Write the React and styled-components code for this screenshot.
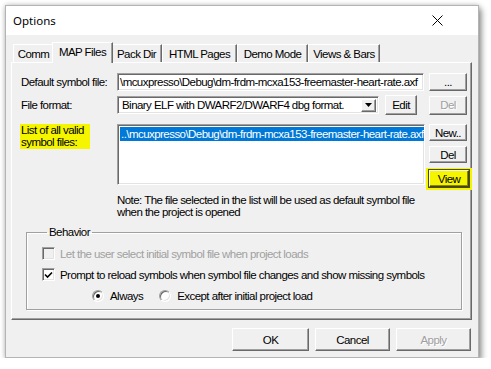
import React from 'react';
import styled, { createGlobalStyle } from 'styled-components';

const Global = createGlobalStyle`
  body {
    margin: 0;
    background: #ffffff;
    font-family: "Liberation Sans", Arial, sans-serif;
    font-size: 11.5px;
    letter-spacing: -0.55px;
    color: #000000;
  }
`;

const Window = styled.div`
  //dialog frame
  margin: 5px 0 0 5px;
  width: 474px;
  height: 353px;
  box-sizing: border-box;
  border: 1px solid #b4b4b4;
  background: #f0f0f0;
  box-shadow: 0 0 5px rgba(0, 0, 0, 0.25), 3px 4px 6px rgba(0, 0, 0, 0.35);
  display: flex;
  flex-direction: column;
`;

const TitleBar = styled.div`
  height: 29px;
  background: #ffffff;
  display: flex;
  align-items: center;
  justify-content: space-between;
  padding: 0 0 0 7px;
  font-family: "Noto Sans", "Open Sans", sans-serif;
  font-size: 11.5px;
  letter-spacing: 0;
`;

const CloseBox = styled.div`
  width: 46px;
  height: 29px;
  display: flex;
  align-items: center;
  justify-content: center;
  margin-right: 18px;
`;

const Body = styled.div`
  flex: 1;
  display: flex;
  flex-direction: column;
  padding: 7px 6px 0 5px;
`;

const TabStrip = styled.div`
  display: flex;
  align-items: flex-end;
  height: 20px;
  padding-left: 2px;
  position: relative;
  z-index: 1;
`;

const Tab = styled.div`
  //tab header
  box-sizing: border-box;
  width: ${p => p.$w}px;
  height: ${p => (p.$active ? 21 : 18)}px;
  margin: ${p => (p.$active ? '0 -2px -1px -2px' : '0')};
  border: 1px solid;
  border-bottom: none;
  border-color: #ffffff #696969 transparent #ffffff;
  box-shadow: inset -1px 0 #a0a0a0;
  background: #f0f0f0;
  display: flex;
  justify-content: center;
  align-items: ${p => (p.$active ? 'flex-start' : 'center')};
  padding-top: ${p => (p.$active ? 3 : 0)}px;
  white-space: nowrap;
  position: relative;
  z-index: ${p => (p.$active ? 2 : 1)};
`;

const Panel = styled.div`
  box-sizing: border-box;
  height: 258px;
  border: 1px solid;
  border-color: #ffffff #696969 #696969 #ffffff;
  box-shadow: inset -1px -1px #a0a0a0;
  padding: 10px 0 0 9px;
  display: flex;
  flex-direction: column;
`;

const Row = styled.div`
  display: grid;
  grid-template-columns: 92px 308px 38px;
  column-gap: 4px;
  margin-top: ${p => p.$top || 0}px;
  height: ${p => p.$h}px;
  align-items: ${p => p.$align || 'center'};
`;

const Label = styled.div`
  white-space: nowrap;
`;

const Marked = styled.div`
  //yellow highlight
  background: #f5f500;
  width: 69px;
  margin-left: -1px;
  padding: 1px 0 1px 1px;
  line-height: 11.5px;
`;

const TextBox = styled.div`
  box-sizing: border-box;
  height: ${p => p.$h || 18}px;
  width: ${p => p.$w || 307}px;
  background: #ffffff;
  border: 1px solid;
  border-color: #a0a0a0 #ffffff #ffffff #a0a0a0;
  box-shadow: inset 1px 1px #696969, inset -1px -1px #e3e3e3;
  display: flex;
  align-items: center;
  padding-left: 2px;
  white-space: nowrap;
  overflow: hidden;
`;

const ComboLine = styled.div`
  display: flex;
  align-items: center;
  gap: 6px;
`;

const Combo = styled(TextBox)`
  justify-content: space-between;
  padding: 0 2px 0 4px;
`;

const DropBtn = styled.div`
  box-sizing: border-box;
  width: 15px;
  height: 13px;
  background: #f0f0f0;
  border: 1px solid;
  border-color: #ffffff #696969 #696969 #ffffff;
  box-shadow: inset -1px -1px #a0a0a0;
  display: flex;
  align-items: center;
  justify-content: center;
`;

const Button = styled.div`
  //classic push button
  box-sizing: border-box;
  width: ${p => p.$w || 38}px;
  height: ${p => p.$h || 18}px;
  background: #f0f0f0;
  border: 1px solid;
  border-color: #ffffff #696969 #696969 #ffffff;
  box-shadow: inset -1px -1px #a0a0a0;
  display: flex;
  align-items: center;
  justify-content: center;
  color: ${p => (p.$disabled ? '#a0a0a0' : '#000000')};
  text-shadow: ${p => (p.$disabled ? '1px 1px #ffffff' : 'none')};
`;

const BUtton = styled(Button)`
  //focused View button
  border-color: #ffffff #404040 #404040 #ffffff;
  outline: 1px solid #505000;
  background: #f5f500;
  box-shadow: inset -1px -1px #8a8a00;
`;

const Glow = styled.div`
  background: #f5f500;
  padding: 2px 3px 3px 3px;
  margin-left: -3px;
  width: 46px;
  box-sizing: border-box;
`;

const ListBox = styled(TextBox)`
  height: 61px;
  align-items: flex-start;
  padding: 2px 0 0 2px;
`;

const Selected = styled.div`
  background: #0078d7;
  color: #ffffff;
  width: 100%;
  height: 14px;
  line-height: 14px;
  padding-left: 1px;
  white-space: nowrap;
`;

const ButtonStack = styled.div`
  display: flex;
  flex-direction: column;
  gap: 5px;
  align-self: start;
`;

const Note = styled.div`
  grid-column: 2 / 4;
  line-height: 12px;
  white-space: nowrap;
`;

const Group = styled.fieldset`
  //behavior group
  margin: 9px 0 0 5px;
  width: 436px;
  height: 83px;
  box-sizing: border-box;
  border: 1px solid #a0a0a0;
  box-shadow: 1px 1px #ffffff, inset 1px 1px #ffffff;
  padding: 10px 0 0 15px;
  display: flex;
  flex-direction: column;
  gap: 8px;
  legend {
    padding: 0 2px;
    margin-left: 5px;
    line-height: 10px;
  }
`;

const Check = styled.div`
  display: flex;
  align-items: center;
  gap: 5px;
  height: 13px;
  color: ${p => (p.$disabled ? '#a0a0a0' : '#000000')};
  white-space: nowrap;
`;

const Box = styled.div`
  box-sizing: border-box;
  width: 13px;
  height: 13px;
  border: 1px solid;
  border-color: #a0a0a0 #ffffff #ffffff #a0a0a0;
  box-shadow: inset 1px 1px #696969, inset -1px -1px #e3e3e3;
  background: ${p => (p.$disabled ? '#f0f0f0' : '#ffffff')};
  display: flex;
  align-items: center;
  justify-content: center;
`;

const Radio = styled.div`
  box-sizing: border-box;
  width: 12px;
  height: 12px;
  border-radius: 50%;
  border: 1px solid;
  border-color: #a0a0a0 #ffffff #ffffff #a0a0a0;
  box-shadow: inset 1px 1px #696969, inset -1px -1px #e3e3e3;
  background: #ffffff;
  display: flex;
  align-items: center;
  justify-content: center;
  margin-right: 1px;
  &::after {
    content: '';
    width: 4px;
    height: 4px;
    border-radius: 50%;
    background: ${p => (p.$on ? '#000000' : 'transparent')};
  }
`;

const RadioRow = styled.div`
  display: flex;
  gap: 16px;
  padding-left: 50px;
`;

const Footer = styled.div`
  display: flex;
  justify-content: flex-end;
  gap: 6px;
  margin-top: 8px;
  padding-right: 1px;
`;

const tabs = [
  ['Comm', 41],
  ['MAP Files', 57],
  ['Pack Dir', 51],
  ['HTML Pages', 75],
  ['Demo Mode', 71],
  ['Views & Bars', 72],
];

export default function App() {
  return (
    <>
      <Global />
      <Window>
        <TitleBar>
          <span>Options</span>
          <CloseBox>
            <svg width="11" height="11" viewBox="0 0 11 11">
              <path d="M0.5 0.5 L10.5 10.5 M10.5 0.5 L0.5 10.5" stroke="#000" strokeWidth="1" />
            </svg>
          </CloseBox>
        </TitleBar>
        <Body>
          <TabStrip>
            {tabs.map(([name, w]) => (
              <Tab key={name} $w={name === 'MAP Files' ? w + 4 : w} $active={name === 'MAP Files'}>
                {name}
              </Tab>
            ))}
          </TabStrip>
          <Panel>
            <Row $h={18}>
              <Label>Default symbol file:</Label>
              <TextBox>\mcuxpresso\Debug\dm-frdm-mcxa153-freemaster-heart-rate.axf</TextBox>
              <Button>...</Button>
            </Row>
            <Row $h={20} $top={4}>
              <Label>File format:</Label>
              <ComboLine>
                <Combo $w={262} $h={18}>
                  <span>Binary ELF with DWARF2/DWARF4 dbg format.</span>
                  <DropBtn>
                    <svg width="7" height="4" viewBox="0 0 7 4">
                      <path d="M0 0 H7 L3.5 4 Z" fill="#000" />
                    </svg>
                  </DropBtn>
                </Combo>
                <Button $w={32} $h={20}>Edit</Button>
              </ComboLine>
              <Button $disabled $h={19}>Del</Button>
            </Row>
            <Row $h={64} $top={9} $align="start">
              <Marked>List of all valid symbol files:</Marked>
              <ListBox $w={308}>
                <Selected>..\mcuxpresso\Debug\dm-frdm-mcxa153-freemaster-heart-rate.axf</Selected>
              </ListBox>
              <ButtonStack>
                <Button $h={17}>New..</Button>
                <Button $h={17}>Del</Button>
                <Glow>
                  <BUtton $h={17} $w={40}>View</BUtton>
                </Glow>
              </ButtonStack>
            </Row>
            <Row $h={24} $top={6}>
              <div />
              <Note>
                Note: The file selected in the list will be used as default symbol file
                <br />
                when the project is opened
              </Note>
            </Row>
            <Group>
              <legend>Behavior</legend>
              <Check $disabled>
                <Box $disabled />
                Let the user select initial symbol file when project loads
              </Check>
              <Check>
                <Box>
                  <svg width="9" height="8" viewBox="0 0 9 8">
                    <path d="M1 3.5 L3.5 6 L8 1.5" stroke="#000" strokeWidth="1.6" fill="none" />
                  </svg>
                </Box>
                Prompt to reload symbols when symbol file changes and show missing symbols
              </Check>
              <RadioRow>
                <Check>
                  <Radio $on />
                  Always
                </Check>
                <Check>
                  <Radio />
                  Except after initial project load
                </Check>
              </RadioRow>
            </Group>
          </Panel>
          <Footer>
            <Button $w={77} $h={23}>OK</Button>
            <Button $w={75} $h={23}>Cancel</Button>
            <Button $w={75} $h={23} $disabled>Apply</Button>
          </Footer>
        </Body>
      </Window>
    </>
  );
}
